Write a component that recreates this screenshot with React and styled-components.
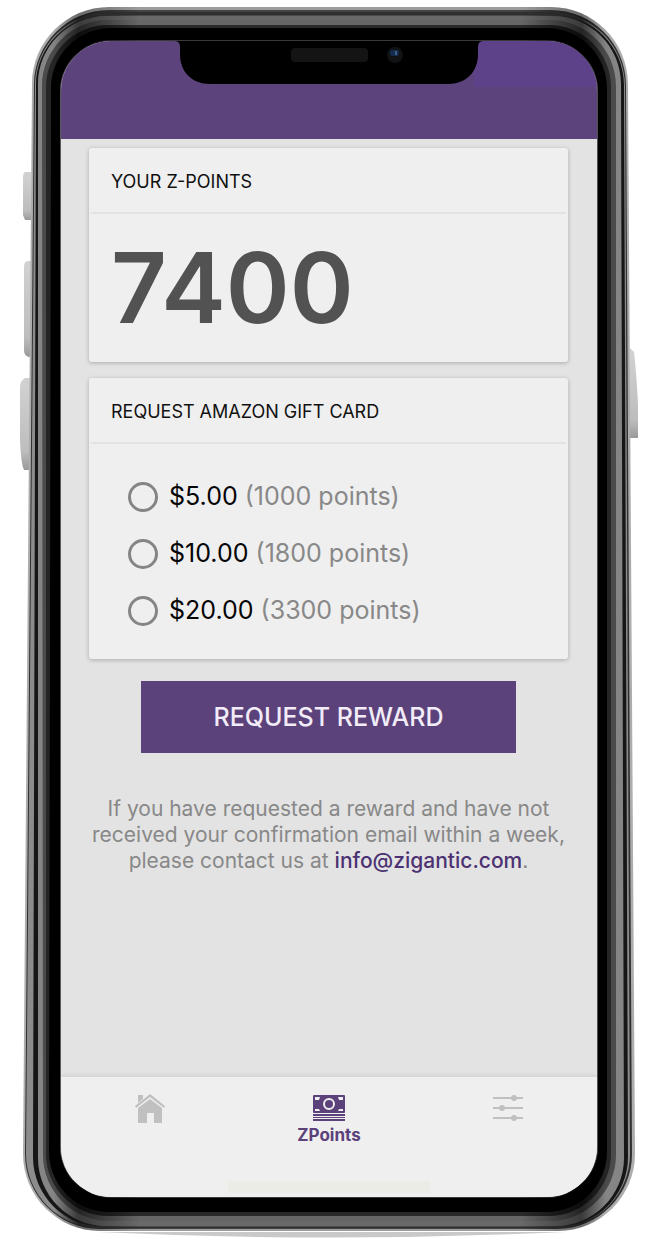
import React, { useState } from "react";
import styled, { createGlobalStyle } from "styled-components";

const purple = "#5c427a";

const GlobalStyle = createGlobalStyle`
  * { box-sizing: border-box; }
  body {
    margin: 0;
    background: #fff;
    font-family: Inter, "Liberation Sans", sans-serif;
    color: #111;
  }
`;

const Device = styled.div`
  position: relative;
  display: flex;
  min-height: 100vh;
  padding: 41px 63px 43px 61px;
`;

const FrameArt = styled.svg`
  position: absolute;
  inset: 0;
  width: 100%;
  height: 100%;
`;

const Screen = styled.div`
  position: relative;
  display: flex;
  flex-direction: column;
  flex: 1;
  min-width: 0;
  overflow: hidden;
  border-radius: 50px;
  background: #e3e3e3;
`;

const Header = styled.header`
  height: 98px;
  flex-shrink: 0;
  background: linear-gradient(#5d4189 46px, transparent 46px) right top / 23% 100% no-repeat, #5d437c;
`;

const Notch = styled.svg`
  position: absolute;
  top: -1px;
  left: 50%;
  width: 308px;
  height: 44px;
  transform: translateX(-50%);
`;

const Main = styled.main`
  display: flex;
  flex-direction: column;
  flex: 1;
  padding: 9px 29px 24px 28px;
`;

const Card = styled.section`
  margin-bottom: 16px;
  border-radius: 3px;
  background: #efefef;
  box-shadow: 0 1px 4px rgba(0, 0, 0, 0.25);
`;

const CardTitle = styled.h2`
  margin: 0 2px;
  padding: 4px 20px 0;
  border-bottom: 2px solid #e2e2e2;
  font-size: 18px;
  font-weight: 400;
  line-height: 60px;
`;

const Balance = styled.p`
  margin: 0;
  padding: 24px 22px;
  color: #525252;
  font-size: 97px;
  font-weight: 600;
  line-height: 100px;
`;

const Options = styled.div`
  display: grid;
  gap: 17px;
  padding: 32px 38px 29px 39px;
`;

const Option = styled.label`
  display: flex;
  align-items: center;
  gap: 11px;
  font-size: 25px;
  line-height: 40px;
  color: #888;
`;

const Price = styled.span`
  color: #050505;
`;

const Radio = styled.input`
  appearance: none;
  flex-shrink: 0;
  width: 30px;
  height: 30px;
  margin: 2px 0 0;
  border: 3px solid #858585;
  border-radius: 50%;
  &:checked {
    border-color: ${purple};
    background: radial-gradient(${purple} 50%, transparent 55%);
  }
`;

const RequestButton = styled.button`
  margin: 6px 52px 0;
  padding: 0;
  border: 0;
  background: ${purple};
  color: #f1ecf7;
  font-family: inherit;
  font-size: 25px;
  font-weight: 500;
  line-height: 72px;
`;

const Note = styled.p`
  margin: 43px 0 0;
  color: #888;
  font-size: 21px;
  line-height: 26px;
  text-align: center;
`;

const Mail = styled.a`
  color: #4c3272;
  font-weight: 500;
  text-decoration: none;
`;

const TabBar = styled.nav`
  display: grid;
  grid-template-columns: repeat(3, 1fr);
  grid-template-rows: 1fr 12px;
  height: 120px;
  flex-shrink: 0;
  padding: 15px 0 4px;
  background: #efefef;
  box-shadow: 0 -2px 4px rgba(0, 0, 0, 0.07);
`;

const Tab = styled.a`
  display: flex;
  flex-direction: column;
  align-items: center;
  gap: 1px;
  color: ${(p) => (p.$active ? purple : "#c0c0c0")};
  font-size: 17px;
  font-weight: 700;
  line-height: 20px;
  text-decoration: none;
`;

const TabIcon = styled.svg`
  width: 34px;
  height: 32px;
  fill: currentColor;
`;

const HomeIndicator = styled.div`
  grid-column: 1 / -1;
  justify-self: center;
  width: 202px;
  background: #ebece5;
`;

/* Metal bands from the outer rim to the black bezel. Side tones differ from the top and bottom ones,
   and each band darkens as it goes round a corner. */
const bands = [
  { l: [32, 23], r: [628, 635], t: 7, b: 1231, rad: 77, side: "#adadad", turn: "#6a6a6a", mid: "#9c9c9c" },
  { l: [34, 25], r: [626, 632], t: 10, b: 1229, rad: 75, side: "#303030", turn: "#181818", mid: "#444444" },
  { l: [35, 26], r: [625, 630], t: 12, b: 1228, rad: 74, side: "#8c8c8c", turn: "#262626", mid: "#303030" },
  { l: [36, 33], r: [624, 628], t: 15, b: 1227, rad: 70, side: "#161616", turn: "#141414", mid: "#4a4a4a" },
  { l: [38, 38], r: [621, 624], t: 16, b: 1226, rad: 68, side: "#858585", turn: "#3a3a3a", mid: "#696969" },
  { l: [42, 43], r: [616, 616], t: 20, b: 1221, rad: 66, side: "#4b4b4b", turn: "#242424", mid: "#666666" },
  { l: [46, 46], r: [611, 611], t: 25, b: 1216, rad: 62, side: "#252525", turn: "#0c0c0c", mid: "#292929" },
  { l: [51, 49], r: [607, 607], t: 28, b: 1212, rad: 60, side: "#000000", turn: "#000000", mid: "#000000" },
  { l: [60, 60], r: [598, 598], t: 40, b: 1198, rad: 51, side: "#777777", turn: "#101010", mid: "#3a3a3a" },
];

function outline({ l, r, t, b, rad }) {
  const k = rad * 0.45;
  return `M${l[0] + rad} ${t}H${r[0] - rad}C${r[0] - k} ${t} ${r[0]} ${t + k} ${r[0]} ${t + rad}
    L${r[1]} ${b - rad}C${r[1]} ${b - k} ${r[1] - k} ${b} ${r[1] - rad} ${b}
    H${l[1] + rad}C${l[1] + k} ${b} ${l[1]} ${b - k} ${l[1]} ${b - rad}
    L${l[0]} ${t + rad}C${l[0]} ${t + k} ${l[0] + k} ${t} ${l[0] + rad} ${t}Z`;
}

function PhoneFrame() {
  return (
    <FrameArt viewBox="0 0 660 1240" preserveAspectRatio="none" aria-hidden="true">
      <defs>
        {bands.map((band, i) => (
          <linearGradient key={i} id={`band${i}`} gradientUnits="userSpaceOnUse" x1="23" x2="637" y1="0" y2="0">
            <stop offset="0.05" stopColor={band.side} />
            <stop offset="0.09" stopColor={band.turn} />
            <stop offset="0.19" stopColor={band.mid} />
            <stop offset="0.81" stopColor={band.mid} />
            <stop offset="0.91" stopColor={band.turn} />
            <stop offset="0.95" stopColor={band.side} />
          </linearGradient>
        ))}
        <linearGradient id="key" x1="0" x2="0" y1="0" y2="1">
          <stop offset="0" stopColor="#d2d2d2" />
          <stop offset="0.8" stopColor="#bdbdbd" />
          <stop offset="1" stopColor="#999" />
        </linearGradient>
      </defs>
      <path d="M98 1232Q330 1243 565 1232Z" fill="#c9c9c9" />
      <path d="M31 172H25Q23 173 23 178V215L25 220H31Z" fill="url(#key)" />
      <path d="M31 261H27Q24 262 24 267V350Q24 356 29 357H31Z" fill="url(#key)" />
      <path d="M31 378H25Q20 381 20 387V440Q21 464 24 470H31Z" fill="url(#key)" />
      <path d="M630 348L634 352Q637 380 638 405V438H630Z" fill="url(#key)" />
      {bands.map((band, i) => (
        <path key={i} d={outline(band)} fill={`url(#band${i})`} />
      ))}
    </FrameArt>
  );
}

function HomeIcon() {
  return (
    <TabIcon viewBox="0 0 34 32">
      <path d="M2 14 17 2l15 12-1 2L17 5 3 16Z" />
      <path d="M5 3h5v4l-5 4Z" />
      <path d="M5 16 17 7l12 9v15h-8V21h-7v10H5Z" />
    </TabIcon>
  );
}

function CashIcon() {
  return (
    <TabIcon viewBox="0 0 34 32">
      <rect x="1" y="3" width="32" height="18" rx="1" />
      <path d="M1 22h32v2H1ZM1 25h32v1H1ZM1 27h32v2H1Z" />
      <circle cx="17" cy="12" r="5" fill="none" stroke="#efefef" strokeWidth="2" />
      <path d="M3 5h5l-1 3H3ZM31 5h-5l1 3h4ZM3 19h5l-1-2H3ZM31 19h-5l1-2h4Z" fill="#efefef" />
    </TabIcon>
  );
}

function SlidersIcon() {
  return (
    <TabIcon viewBox="0 0 34 32">
      <path d="M2 5h30v2H2ZM2 15h30v2H2ZM2 25h30v2H2Z" />
      <circle cx="23" cy="6" r="3" />
      <circle cx="11" cy="16" r="3" />
      <circle cx="23" cy="26" r="3" />
    </TabIcon>
  );
}

const rewards = [
  { price: "$5.00", points: 1000 },
  { price: "$10.00", points: 1800 },
  { price: "$20.00", points: 3300 },
];

export default function App() {
  const [choice, setChoice] = useState(null);
  return (
    <Device>
      <GlobalStyle />
      <PhoneFrame />
      <Screen>
        <Header />
        <Notch viewBox="0 0 308 44" aria-hidden="true">
          <path d="M0 0H308V1Q303 1 303 7V14C303 32 291 44 273 44H35C17 44 5 32 5 14V7Q5 1 0 1Z" fill="#000" />
          <rect x="116" y="8" width="77" height="14" rx="4" fill="#141414" />
          <circle cx="220" cy="15" r="8" fill="#101214" />
          <rect x="215" y="10" width="9" height="6" rx="2" fill="#142b4d" />
          <rect x="220" y="11" width="2" height="4" fill="#415f88" />
        </Notch>
        <Main>
          <Card>
            <CardTitle>YOUR Z-POINTS</CardTitle>
            <Balance>7400</Balance>
          </Card>
          <Card>
            <CardTitle id="gift-title">REQUEST AMAZON GIFT CARD</CardTitle>
            <Options role="radiogroup" aria-labelledby="gift-title">
              {rewards.map(({ price, points }) => (
                <Option key={price}>
                  <Radio type="radio" name="reward" checked={choice === price} onChange={() => setChoice(price)} />
                  <span>
                    <Price>{price}</Price> ({points} points)
                  </span>
                </Option>
              ))}
            </Options>
          </Card>
          <RequestButton type="button">REQUEST REWARD</RequestButton>
          <Note>
            If you have requested a reward and have not received your confirmation email within a week, please contact
            us at <Mail href="mailto:info@zigantic.com">info@zigantic.com</Mail>.
          </Note>
        </Main>
        <TabBar>
          <Tab href="#home" aria-label="Home">
            <HomeIcon />
          </Tab>
          <Tab href="#zpoints" $active aria-current="page">
            <CashIcon />
            ZPoints
          </Tab>
          <Tab href="#settings" aria-label="Settings">
            <SlidersIcon />
          </Tab>
          <HomeIndicator />
        </TabBar>
      </Screen>
    </Device>
  );
}
